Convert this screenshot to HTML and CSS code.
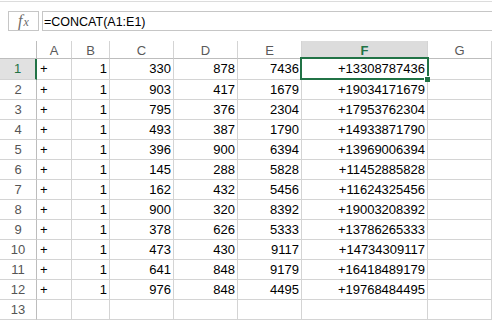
FILE: index.html
```html
<!DOCTYPE html>
<html>
<head>
<meta charset="utf-8">
<link rel="stylesheet" href="styles.css">
</head>
<body>
<div class="topline"></div>
<div class="fbar">
  <div class="fx"><span class="f">f</span><span class="x">x</span></div>
  <div class="finput">=CONCAT(A1:E1)</div>
</div>
<div class="sheet">
  <div class="grid">
    <div class="ch corner"></div><div class="ch">A</div><div class="ch">B</div><div class="ch">C</div><div class="ch">D</div><div class="ch">E</div><div class="ch sel">F</div><div class="ch">G</div>

    <div class="rh first selr">1</div><div class="c l first">+</div><div class="c first">1</div><div class="c first">330</div><div class="c first">878</div><div class="c first">7436</div><div class="c first">+13308787436</div><div class="c first"></div>
    <div class="rh">2</div><div class="c l">+</div><div class="c">1</div><div class="c">903</div><div class="c">417</div><div class="c">1679</div><div class="c">+19034171679</div><div class="c"></div>
    <div class="rh">3</div><div class="c l">+</div><div class="c">1</div><div class="c">795</div><div class="c">376</div><div class="c">2304</div><div class="c">+17953762304</div><div class="c"></div>
    <div class="rh">4</div><div class="c l">+</div><div class="c">1</div><div class="c">493</div><div class="c">387</div><div class="c">1790</div><div class="c">+14933871790</div><div class="c"></div>
    <div class="rh">5</div><div class="c l">+</div><div class="c">1</div><div class="c">396</div><div class="c">900</div><div class="c">6394</div><div class="c">+13969006394</div><div class="c"></div>
    <div class="rh">6</div><div class="c l">+</div><div class="c">1</div><div class="c">145</div><div class="c">288</div><div class="c">5828</div><div class="c">+11452885828</div><div class="c"></div>
    <div class="rh">7</div><div class="c l">+</div><div class="c">1</div><div class="c">162</div><div class="c">432</div><div class="c">5456</div><div class="c">+11624325456</div><div class="c"></div>
    <div class="rh">8</div><div class="c l">+</div><div class="c">1</div><div class="c">900</div><div class="c">320</div><div class="c">8392</div><div class="c">+19003208392</div><div class="c"></div>
    <div class="rh">9</div><div class="c l">+</div><div class="c">1</div><div class="c">378</div><div class="c">626</div><div class="c">5333</div><div class="c">+13786265333</div><div class="c"></div>
    <div class="rh">10</div><div class="c l">+</div><div class="c">1</div><div class="c">473</div><div class="c">430</div><div class="c">9117</div><div class="c">+14734309117</div><div class="c"></div>
    <div class="rh">11</div><div class="c l">+</div><div class="c">1</div><div class="c">641</div><div class="c">848</div><div class="c">9179</div><div class="c">+16418489179</div><div class="c"></div>
    <div class="rh">12</div><div class="c l">+</div><div class="c">1</div><div class="c">976</div><div class="c">848</div><div class="c">4495</div><div class="c">+19768484495</div><div class="c"></div>
    <div class="rh">13</div><div class="c"></div><div class="c"></div><div class="c"></div><div class="c"></div><div class="c"></div><div class="c"></div><div class="c"></div>
  </div>
  <div class="selection"></div>
  <div class="handle"></div>
</div>
</body>
</html>
```

FILE: styles.css
```css
* { box-sizing: border-box; }
html, body { margin: 0; padding: 0; background: #fff; overflow: hidden; }
body {
  width: 492px;
  height: 320px;
  font-family: "Liberation Sans", Arial, sans-serif;
  font-size: 13px;
  color: #000;
}
.topline {
  margin-top: 1px;
  height: 1px;
  background: #dcdcdc;
}
.fbar {
  display: flex;
  margin-top: 9px;
  height: 20px;
  gap: 3px;
  padding-left: 8px;
}
.fx {
  width: 31px;
  height: 20px;
  border: 1px solid #c6c6c6;
  display: flex;
  align-items: baseline;
  justify-content: center;
  font-family: "Liberation Serif", "Times New Roman", serif;
  font-style: italic;
  color: #6b6b6b;
  line-height: 17px;
}
.fx .f { font-size: 16px; }
.fx .x { font-size: 12px; margin-left: 1px; }
.finput {
  flex: 1;
  height: 20px;
  border: 1px solid #c6c6c6;
  border-right: none;
  font-size: 12.5px;
  line-height: 18px;
  padding-left: 1px;
  padding-top: 1px;
  color: #000;
}
.sheet {
  position: relative;
  margin-top: 10px;
}
.grid {
  display: grid;
  grid-template-columns: 37px 35px 38px 64px 64px 64px 126px 64px;
  grid-template-rows: 18px 21px repeat(12, 20px);
}
.ch {
  border-right: 1px solid #d4d4d4;
  border-bottom: 1px solid #bdbdbd;
  color: #5a5a5a;
  text-align: center;
  font-size: 13px;
  line-height: 17px;
  padding-top: 1px;
}
.ch.corner { border-right-color: #bdbdbd; }
.ch.sel {
  background: #dcdcdc;
  color: #217346;
  font-weight: bold;
}
.rh {
  border-right: 1px solid #bdbdbd;
  border-bottom: 1px solid #d4d4d4;
  color: #555;
  text-align: center;
  line-height: 19px;
}
.rh.first { line-height: 20px; }
.rh.selr {
  background: #e1e1e1;
  color: #217346;
  border-right: 2px solid #217346;
}
.c {
  border-right: 1px solid #d4d4d4;
  border-bottom: 1px solid #d4d4d4;
  text-align: right;
  padding-right: 2px;
  line-height: 19px;
  white-space: nowrap;
}
.c.first { line-height: 20px; }
.c.l {
  text-align: left;
  padding-left: 3px;
  padding-right: 0;
}
.selection {
  position: absolute;
  left: 300px;
  top: 16px;
  width: 129px;
  height: 23px;
  border: 2px solid #217346;
}
.handle {
  position: absolute;
  left: 424px;
  top: 35px;
  width: 6px;
  height: 6px;
  background: #217346;
  border: 1px solid #fff;
  border-right: none;
  border-bottom: none;
}
```
